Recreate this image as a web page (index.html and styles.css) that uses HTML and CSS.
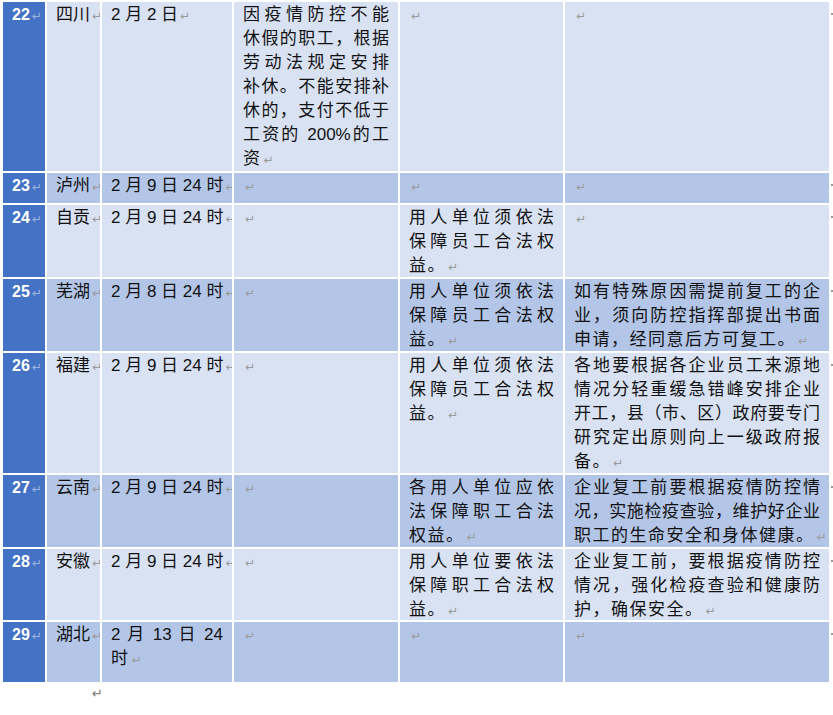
FILE: index.html
```
<!DOCTYPE html>
<html lang="zh-CN">
<head>
<meta charset="utf-8">
<title>复工时间表</title>
<link rel="stylesheet" href="styles.css">
</head>
<body>
<div class="sheet">
  <div class="table">
    <div class="row light">
      <div class="cell num">22<span class="mk">↵</span></div>
      <div class="cell">四川<span class="mk">↵</span></div>
      <div class="cell">2 月 2 日<span class="mk">↵</span></div>
      <div class="cell">
        <span class="ln">因疫情防控不能</span>
        <span class="ln">休假的职工，根据</span>
        <span class="ln">劳动法规定安排</span>
        <span class="ln">补休。不能安排补</span>
        <span class="ln">休的，支付不低于</span>
        <span class="ln">工资的 200%的工</span>
        <span class="last">资<span class="mk">↵</span></span>
      </div>
      <div class="cell"><span class="mk">↵</span></div>
      <div class="cell"><span class="mk">↵</span></div>
      <div class="eor"></div>
    </div>
    <div class="row dark">
      <div class="cell num">23<span class="mk">↵</span></div>
      <div class="cell">泸州<span class="mk">↵</span></div>
      <div class="cell">2 月 9 日 24 时<span class="mk">↵</span></div>
      <div class="cell"><span class="mk">↵</span></div>
      <div class="cell"><span class="mk">↵</span></div>
      <div class="cell"><span class="mk">↵</span></div>
      <div class="eor"></div>
    </div>
    <div class="row light">
      <div class="cell num">24<span class="mk">↵</span></div>
      <div class="cell">自贡<span class="mk">↵</span></div>
      <div class="cell">2 月 9 日 24 时<span class="mk">↵</span></div>
      <div class="cell"><span class="mk">↵</span></div>
      <div class="cell">
        <span class="ln">用人单位须依法</span>
        <span class="ln">保障员工合法权</span>
        <span class="last">益。<span class="mk">↵</span></span>
      </div>
      <div class="cell"><span class="mk">↵</span></div>
      <div class="eor"></div>
    </div>
    <div class="row dark">
      <div class="cell num">25<span class="mk">↵</span></div>
      <div class="cell">芜湖<span class="mk">↵</span></div>
      <div class="cell">2 月 8 日 24 时<span class="mk">↵</span></div>
      <div class="cell"><span class="mk">↵</span></div>
      <div class="cell">
        <span class="ln">用人单位须依法</span>
        <span class="ln">保障员工合法权</span>
        <span class="last">益。<span class="mk">↵</span></span>
      </div>
      <div class="cell">
        <span class="ln">如有特殊原因需提前复工的企</span>
        <span class="ln">业，须向防控指挥部提出书面</span>
        <span class="last">申请，经同意后方可复工。<span class="mk">↵</span></span>
      </div>
      <div class="eor"></div>
    </div>
    <div class="row light">
      <div class="cell num">26<span class="mk">↵</span></div>
      <div class="cell">福建<span class="mk">↵</span></div>
      <div class="cell">2 月 9 日 24 时<span class="mk">↵</span></div>
      <div class="cell"><span class="mk">↵</span></div>
      <div class="cell">
        <span class="ln">用人单位须依法</span>
        <span class="ln">保障员工合法权</span>
        <span class="last">益。<span class="mk">↵</span></span>
      </div>
      <div class="cell">
        <span class="ln">各地要根据各企业员工来源地</span>
        <span class="ln">情况分轻重缓急错峰安排企业</span>
        <span class="ln">开工，县（市、区）政府要专门</span>
        <span class="ln">研究定出原则向上一级政府报</span>
        <span class="last">备。<span class="mk">↵</span></span>
      </div>
      <div class="eor"></div>
    </div>
    <div class="row dark">
      <div class="cell num">27<span class="mk">↵</span></div>
      <div class="cell">云南<span class="mk">↵</span></div>
      <div class="cell">2 月 9 日 24 时<span class="mk">↵</span></div>
      <div class="cell"><span class="mk">↵</span></div>
      <div class="cell">
        <span class="ln">各用人单位应依</span>
        <span class="ln">法保障职工合法</span>
        <span class="last">权益。<span class="mk">↵</span></span>
      </div>
      <div class="cell">
        <span class="ln">企业复工前要根据疫情防控情</span>
        <span class="ln">况，实施检疫查验，维护好企业</span>
        <span class="last">职工的生命安全和身体健康。<span class="mk">↵</span></span>
      </div>
      <div class="eor"></div>
    </div>
    <div class="row light">
      <div class="cell num">28<span class="mk">↵</span></div>
      <div class="cell">安徽<span class="mk">↵</span></div>
      <div class="cell">2 月 9 日 24 时<span class="mk">↵</span></div>
      <div class="cell"><span class="mk">↵</span></div>
      <div class="cell">
        <span class="ln">用人单位要依法</span>
        <span class="ln">保障职工合法权</span>
        <span class="last">益。<span class="mk">↵</span></span>
      </div>
      <div class="cell">
        <span class="ln">企业复工前，要根据疫情防控</span>
        <span class="ln">情况，强化检疫查验和健康防</span>
        <span class="last">护，确保安全。<span class="mk">↵</span></span>
      </div>
      <div class="eor"></div>
    </div>
    <div class="row dark">
      <div class="cell num">29<span class="mk">↵</span></div>
      <div class="cell">湖北<span class="mk">↵</span></div>
      <div class="cell">
        <span class="ln">2 月 13 日 24</span>
        <span class="last">时<span class="mk">↵</span></span>
      </div>
      <div class="cell"><span class="mk">↵</span></div>
      <div class="cell"><span class="mk">↵</span></div>
      <div class="cell"><span class="mk">↵</span></div>
      <div class="eor"></div>
    </div>
  </div>
  <p class="after">↵</p>
</div>
</body>
</html>
```

FILE: styles.css
```
body {
  margin: 0;
  background: #ffffff;
  font-family: "Liberation Sans", "Noto Sans CJK SC", sans-serif;
  color: #111111;
}

.sheet {
  padding: 2px 0 0 3px;
}

.table {
  display: grid;
  grid-template-columns: 42px 53px 130px 164px 163px 264px 4px;
  grid-template-rows: 169px 30px 72px 72px 120px 72px 71px 60px;
  gap: 2px;
  width: 832px;
  background: #ffffff;
}

.row {
  display: contents;
}

.cell {
  padding: 1px 9px 0 9px;
  font-size: 17px;
  line-height: 24px;
  white-space: nowrap;
  overflow: hidden;
}

.light > .cell {
  background: #d9e2f3;
}

.dark > .cell {
  background: #b4c6e7;
}

.row > .num {
  background: #4472c4;
  color: #ffffff;
  font-weight: bold;
  font-size: 16px;
}

.ln {
  display: block;
  text-align: justify;
  text-align-last: justify;
}

.last {
  display: block;
  letter-spacing: 1.5px;
}

.mk {
  font-family: "DejaVu Sans", sans-serif;
  font-size: 12px;
  font-weight: normal;
  color: #9a9a9a;
  letter-spacing: 0;
  margin-left: 2px;
}

.num .mk {
  color: #9fb3df;
}

.eor {
  background: #ffffff;
  position: relative;
}

.eor::before {
  content: "";
  position: absolute;
  left: 0;
  top: 11px;
  width: 2px;
  height: 2px;
  background: #9a9a9a;
}

.after {
  margin: 0;
  padding-left: 89px;
  font-family: "DejaVu Sans", sans-serif;
  font-size: 13px;
  line-height: 24px;
  color: #777777;
}
```
